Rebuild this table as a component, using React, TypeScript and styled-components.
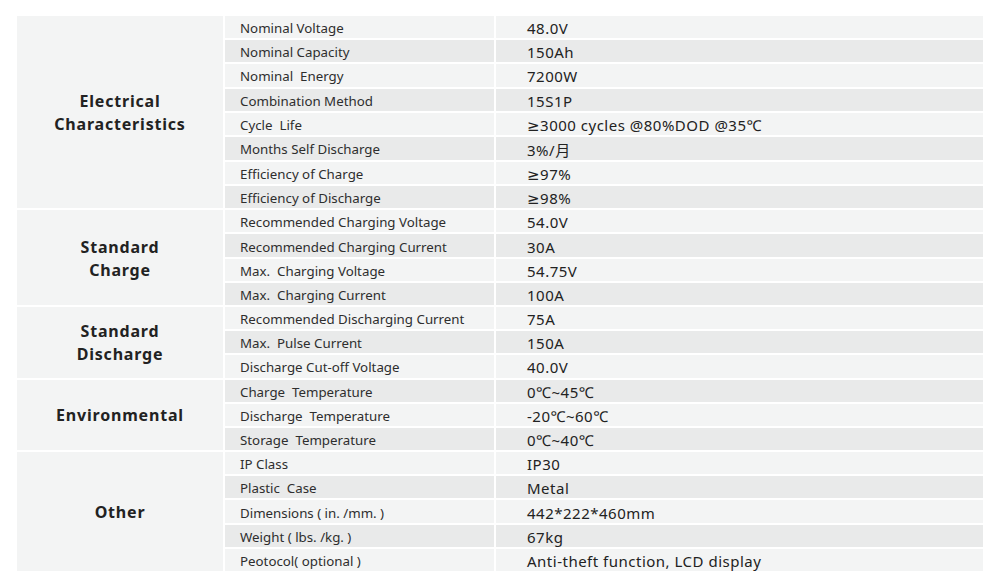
import React from 'react';
import styled, { createGlobalStyle } from 'styled-components';

const GlobalStyle = createGlobalStyle`
  body {
    margin: 0;
    background: #ffffff;
    font-family: "Noto Sans", "DejaVu Sans", "Noto Sans CJK SC", sans-serif;
    color: #333;
  }
`;

type Spec = { label: string; value: string };
type Group = { title: string[]; rows: Spec[] };

const groups: Group[] = [
  {
    title: ['Electrical', 'Characteristics'],
    rows: [
      { label: 'Nominal Voltage', value: '48.0V' },
      { label: 'Nominal Capacity', value: '150Ah' },
      { label: 'Nominal  Energy', value: '7200W' },
      { label: 'Combination Method', value: '15S1P' },
      { label: 'Cycle  Life', value: '≥3000 cycles @80%DOD @35℃' },
      { label: 'Months Self Discharge', value: '3%/月' },
      { label: 'Efficiency of Charge', value: '≥97%' },
      { label: 'Efficiency of Discharge', value: '≥98%' }
    ]
  },
  {
    title: ['Standard', 'Charge'],
    rows: [
      { label: 'Recommended Charging Voltage', value: '54.0V' },
      { label: 'Recommended Charging Current', value: '30A' },
      { label: 'Max.  Charging Voltage', value: '54.75V' },
      { label: 'Max.  Charging Current', value: '100A' }
    ]
  },
  {
    title: ['Standard', 'Discharge'],
    rows: [
      { label: 'Recommended Discharging Current', value: '75A' },
      { label: 'Max.  Pulse Current', value: '150A' },
      { label: 'Discharge Cut-off Voltage', value: '40.0V' }
    ]
  },
  {
    title: ['Environmental'],
    rows: [
      { label: 'Charge  Temperature', value: '0℃~45℃' },
      { label: 'Discharge  Temperature', value: '-20℃~60℃' },
      { label: 'Storage  Temperature', value: '0℃~40℃' }
    ]
  },
  {
    title: ['Other'],
    rows: [
      { label: 'IP Class', value: 'IP30' },
      { label: 'Plastic  Case', value: 'Metal' },
      { label: 'Dimensions ( in. /mm. )', value: '442*222*460mm' },
      { label: 'Weight ( lbs. /kg. )', value: '67kg' },
      { label: 'Peotocol( optional )', value: 'Anti-theft function, LCD display' }
    ]
  }
];

const totalRows = groups.reduce((n, g) => n + g.rows.length, 0);

const Page = styled.div`
  padding: 16px 17px 0 17px;
`;

const SpecTable = styled.div<{ rows: number }>`
  display: grid;
  grid-template-columns: 206px 269px 1fr;
  grid-template-rows: repeat(${({ rows }) => rows}, 1fr);
  column-gap: 2px;
  row-gap: 2px;
  height: 555px;
`;

const Category = styled.div<{ span: number }>`
  grid-column: 1;
  grid-row: span ${({ span }) => span};
  display: flex;
  flex-direction: column;
  align-items: center;
  justify-content: center;
  padding-top: 2px;
  background: #f3f4f4;
  font-weight: 700;
  font-size: 16px;
  line-height: 23px;
  letter-spacing: 0.8px;
  color: #222;
  text-align: center;
`;

const Label = styled.div<{ shade: boolean }>`
  grid-column: 2;
  display: flex;
  align-items: center;
  padding: 2px 0 0 15px;
  background: ${({ shade }) => (shade ? '#e9eaea' : '#f3f4f4')};
  font-size: 13.3px;
  color: #2e2e2e;
  white-space: pre;
`;

const Value = styled.div<{ shade: boolean }>`
  grid-column: 3;
  display: flex;
  align-items: center;
  padding: 2px 0 0 31px;
  background: ${({ shade }) => (shade ? '#e9eaea' : '#f3f4f4')};
  font-size: 15px;
  letter-spacing: 0.5px;
  color: #222;
  white-space: pre;
`;

const App = () => {
  let index = 0;
  return (
    <>
      <GlobalStyle />
      <Page>
        <SpecTable rows={totalRows}>
          {groups.map((group, g) => (
            <React.Fragment key={g}>
              <Category span={group.rows.length}>
                {group.title.map((line, i) => (
                  <div key={i}>{line}</div>
                ))}
              </Category>
              {group.rows.map((row) => {
                const shade = index % 2 === 1;
                index += 1;
                return (
                  <React.Fragment key={row.label}>
                    <Label shade={shade}>{row.label}</Label>
                    <Value shade={shade}>{row.value}</Value>
                  </React.Fragment>
                );
              })}
            </React.Fragment>
          ))}
        </SpecTable>
      </Page>
    </>
  );
};

export default App;
